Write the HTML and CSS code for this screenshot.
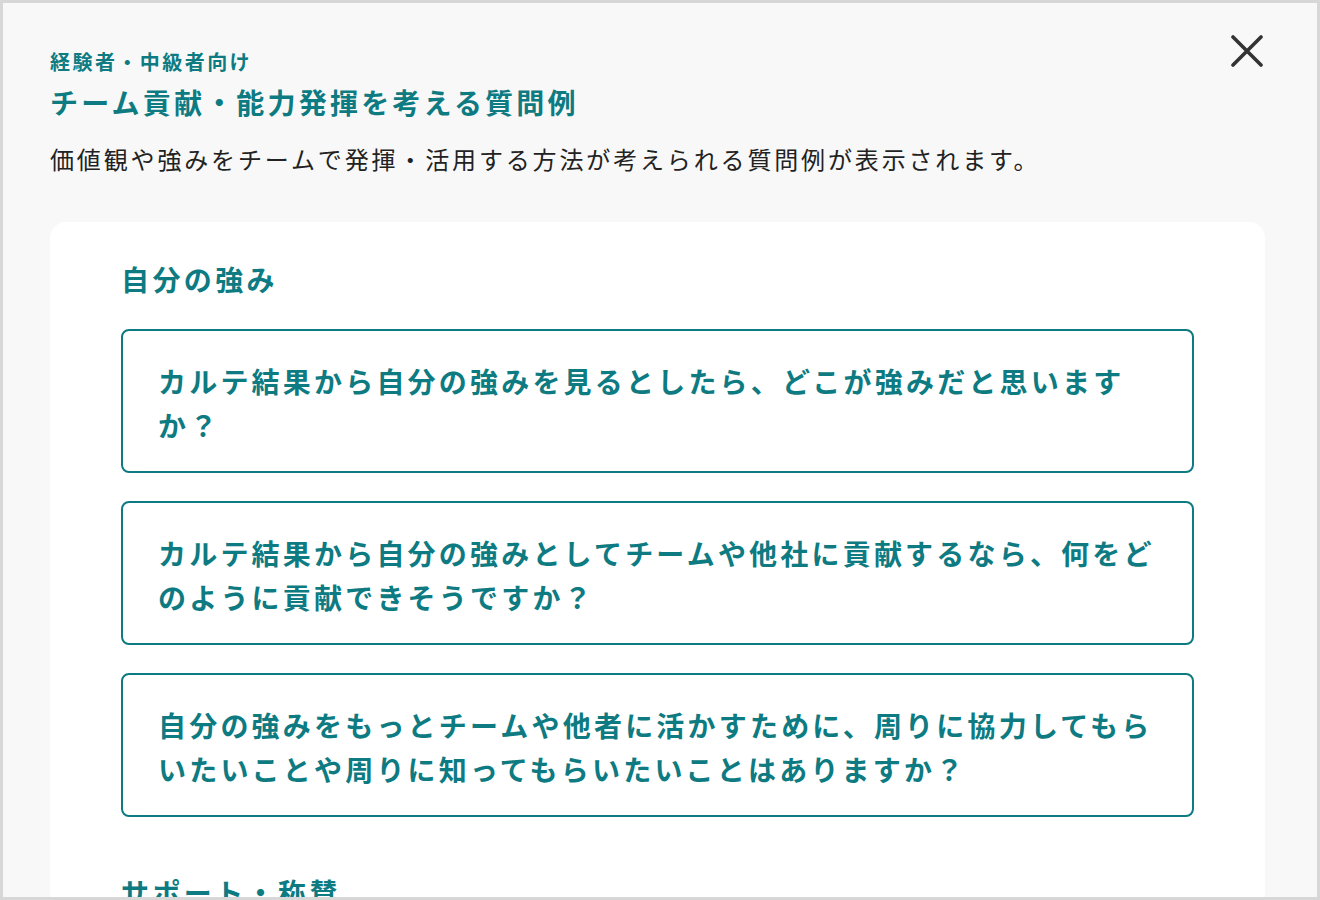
FILE: index.html
```html
<!DOCTYPE html>
<html lang="ja">
<head>
<meta charset="utf-8">
<title>チーム貢献・能力発揮を考える質問例</title>
<link rel="stylesheet" href="styles.css">
</head>
<body>
<div class="frame">
  <header class="head">
    <div class="head-text">
      <p class="level">経験者・中級者向け</p>
      <h1 class="title">チーム貢献・能力発揮を考える質問例</h1>
    </div>
    <button class="close" aria-label="閉じる">
      <svg width="32" height="32" viewBox="0 0 32 32" fill="none" stroke="#333" stroke-width="3.6" stroke-linecap="round">
        <path d="M2 2 L30 30 M30 2 L2 30"/>
      </svg>
    </button>
  </header>
  <p class="desc">価値観や強みをチームで発揮・活用する方法が考えられる質問例が表示されます。</p>
  <main class="card">
    <section class="section">
      <h2 class="section-title">自分の強み</h2>
      <ul class="qlist">
        <li class="q">カルテ結果から自分の強みを見るとしたら、どこが強みだと思いますか？</li>
        <li class="q">カルテ結果から自分の強みとしてチームや他社に貢献するなら、何をどのように貢献できそうですか？</li>
        <li class="q">自分の強みをもっとチームや他者に活かすために、周りに協力してもらいたいことや周りに知ってもらいたいことはありますか？</li>
      </ul>
    </section>
    <section class="section">
      <h2 class="section-title">サポート・称賛</h2>
    </section>
  </main>
</div>
</body>
</html>
```
FILE: styles.css
```css
* { box-sizing: border-box; }
html, body { margin: 0; padding: 0; }
body {
  font-family: "Noto Sans CJK JP", "Noto Sans", sans-serif;
  background: #f8f8f8;
}
.frame {
  width: 1320px;
  height: 900px;
  border: 3px solid #d7d7d7;
  background: #f8f8f8;
  overflow: hidden;
  padding: 45px 52px 0 47px;
}
.head {
  display: flex;
  justify-content: space-between;
  align-items: flex-start;
}
.level {
  margin: 0;
  font-size: 20px;
  line-height: 27px;
  letter-spacing: 2.45px;
  font-weight: 700;
  color: #0d7b81;
}
.title {
  margin: 8px 0 0;
  font-size: 28px;
  line-height: 39px;
  letter-spacing: 3.2px;
  font-weight: 700;
  color: #0d7b81;
}
.close {
  border: 0;
  background: none;
  padding: 0;
  margin: -13px 2px 0 0;
  width: 32px;
  height: 32px;
  cursor: pointer;
}
.close svg { display: block; }
.desc {
  margin: 20px 0 0;
  font-size: 24px;
  line-height: 33px;
  letter-spacing: 2.85px;
  color: #222;
}
.card {
  margin-top: 47px;
  background: #fff;
  border-radius: 16px;
  padding: 38px 71px 40px;
}
.section + .section { margin-top: 56px; }
.section-title {
  margin: 0;
  font-size: 28px;
  line-height: 39px;
  letter-spacing: 3.4px;
  font-weight: 700;
  color: #0d7b81;
}
.qlist {
  list-style: none;
  margin: 30px 0 0;
  padding: 0;
  display: flex;
  flex-direction: column;
  gap: 28px;
}
.q {
  border: 2px solid #0d7b81;
  border-radius: 8px;
  padding: 28px 28px 24px 35px;
  font-size: 28px;
  line-height: 44px;
  letter-spacing: 3.2px;
  font-weight: 700;
  color: #0d7b81;
}
```
